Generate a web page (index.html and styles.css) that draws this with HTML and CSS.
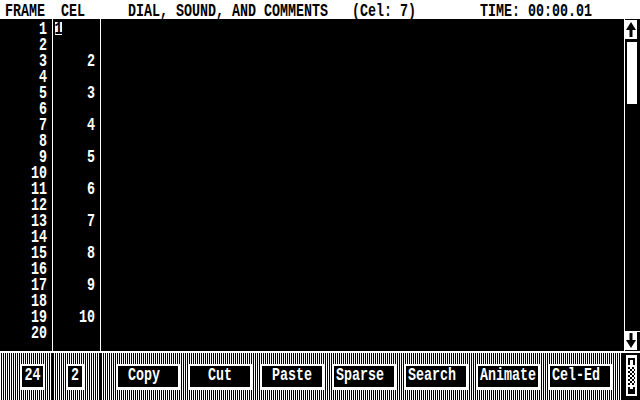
FILE: index.html
```html
<!DOCTYPE html>
<html>
<head>
<meta charset="utf-8">
<link rel="stylesheet" href="styles.css">
</head>
<body>
<div class="screen">
  <div class="header"><span class="t">FRAME  CEL</span><span class="t title">DIAL, SOUND, AND COMMENTS   (Cel: 7)        TIME: 00:00.01</span></div>
  <div class="main">
    <div class="col frames">
      <div class="row"><span class="t">1</span></div>
      <div class="row"><span class="t">2</span></div>
      <div class="row"><span class="t">3</span></div>
      <div class="row"><span class="t">4</span></div>
      <div class="row"><span class="t">5</span></div>
      <div class="row"><span class="t">6</span></div>
      <div class="row"><span class="t">7</span></div>
      <div class="row"><span class="t">8</span></div>
      <div class="row"><span class="t">9</span></div>
      <div class="row"><span class="t">10</span></div>
      <div class="row"><span class="t">11</span></div>
      <div class="row"><span class="t">12</span></div>
      <div class="row"><span class="t">13</span></div>
      <div class="row"><span class="t">14</span></div>
      <div class="row"><span class="t">15</span></div>
      <div class="row"><span class="t">16</span></div>
      <div class="row"><span class="t">17</span></div>
      <div class="row"><span class="t">18</span></div>
      <div class="row"><span class="t">19</span></div>
      <div class="row"><span class="t">20</span></div>
    </div>
    <div class="col cels">
      <div class="row first"><div class="cur"><span class="t">1</span></div></div>
      <div class="row"></div>
      <div class="row"><span class="t">2</span></div>
      <div class="row"></div>
      <div class="row"><span class="t">3</span></div>
      <div class="row"></div>
      <div class="row"><span class="t">4</span></div>
      <div class="row"></div>
      <div class="row"><span class="t">5</span></div>
      <div class="row"></div>
      <div class="row"><span class="t">6</span></div>
      <div class="row"></div>
      <div class="row"><span class="t">7</span></div>
      <div class="row"></div>
      <div class="row"><span class="t">8</span></div>
      <div class="row"></div>
      <div class="row"><span class="t">9</span></div>
      <div class="row"></div>
      <div class="row"><span class="t">10</span></div>
      <div class="row"></div>
    </div>
    <div class="comments"></div>
    <div class="scroll">
      <div class="arrow up"><svg width="12" height="19" viewBox="0 0 12 19"><polygon points="6,2 11,10 7.5,10 7.5,17 4.5,17 4.5,10 1,10" fill="#000"/></svg></div>
      <div class="thumb"></div>
      <div class="track"></div>
      <div class="hline"></div>
      <div class="arrow down"><svg width="12" height="18" viewBox="0 0 12 18"><polygon points="1,8 4.5,8 4.5,1 7.5,1 7.5,8 11,8 6,16" fill="#000"/></svg></div>
    </div>
  </div>
  <div class="bar">
    <div class="seg seg1"><div class="num wide"><span class="t">24</span></div></div>
    <div class="vl"></div>
    <div class="seg seg2"><div class="num"><span class="t">2</span></div></div>
    <div class="vl"></div>
    <div class="seg seg3">
      <div class="btn"><span class="t"> Copy</span></div>
      <div class="btn"><span class="t">  Cut</span></div>
      <div class="btn"><span class="t"> Paste</span></div>
      <div class="btn"><span class="t">Sparse</span></div>
      <div class="btn"><span class="t">Search</span></div>
      <div class="btn"><span class="t">Animate</span></div>
      <div class="btn"><span class="t">Cel-Ed</span></div>
    </div>
    <div class="blk"></div>
    <div class="widget">
      <svg width="11" height="41" viewBox="0 0 11 41">
        <rect x="0" y="0" width="11" height="41" fill="#fff"/>
        <path d="M2 3h7v7h-2v-5h-3v5h-2z" fill="#000"/>
        <g fill="#000">
          <rect x="2" y="12" width="2" height="2"/><rect x="6" y="12" width="2" height="2"/>
          <rect x="4" y="14" width="2" height="2"/><rect x="8" y="14" width="1" height="2"/>
          <rect x="2" y="16" width="2" height="2"/><rect x="6" y="16" width="2" height="2"/>
          <rect x="4" y="18" width="2" height="2"/><rect x="8" y="18" width="1" height="2"/>
          <rect x="2" y="20" width="2" height="2"/><rect x="6" y="20" width="2" height="2"/>
          <rect x="4" y="22" width="2" height="2"/><rect x="8" y="22" width="1" height="2"/>
          <rect x="2" y="24" width="2" height="2"/><rect x="6" y="24" width="2" height="2"/>
          <rect x="4" y="26" width="2" height="2"/><rect x="8" y="26" width="1" height="2"/>
          <rect x="2" y="28" width="2" height="2"/><rect x="6" y="28" width="2" height="2"/>
        </g>
        <path d="M2 32h2v2h3v-2h2v7h-7z" fill="#000"/>
      </svg>
    </div>
    <div class="edge"></div>
  </div>
</div>
</body>
</html>
```
FILE: styles.css
```css
html, body {
  margin: 0;
  padding: 0;
  background: #000;
}

.screen {
  width: 640px;
  height: 400px;
  display: flex;
  flex-direction: column;
  overflow: hidden;
  font-family: "Liberation Mono", "DejaVu Sans Mono", monospace;
  font-weight: bold;
  font-size: 13.33px;
  line-height: 16px;
  color: #fff;
}

.t {
  display: block;
  white-space: pre;
  line-height: 10px;
  height: 10px;
  transform: translateY(6.2px) scaleY(1.42);
}

.header {
  height: 19px;
  flex: none;
  background: #fff;
  color: #000;
  display: flex;
  align-items: flex-start;
  padding-left: 5px;
}

.header .t {
  transform: translateY(6.5px) scaleY(1.42);
}

.title {
  margin-left: 43px;
}

.main {
  height: 332px;
  flex: none;
  display: flex;
  background: #000;
}

.col {
  display: flex;
  flex-direction: column;
  border-right: 1px solid #fff;
}

.frames {
  width: 47px;
  padding-right: 5px;
}

.cels {
  width: 42px;
  padding-right: 5px;
}

.row {
  height: 16px;
  display: flex;
  justify-content: flex-end;
  align-items: flex-start;
}

.row.first {
  justify-content: flex-start;
}

.cur {
  width: 7px;
  height: 13px;
  margin: 3px 0 0 2px;
  background: #fff;
  color: #000;
  display: flex;
  justify-content: center;
}

.cur .t {
  transform: translateY(3px) scaleY(1.42);
}

.comments {
  width: 523px;
  border-right: 1px solid #fff;
}

.scroll {
  width: 15px;
  display: flex;
  flex-direction: column;
}

.arrow {
  width: 12px;
  background: #fff;
  display: flex;
}

.arrow.up {
  height: 19px;
  margin-top: 1px;
}

.arrow.down {
  height: 18px;
  margin-bottom: 1px;
}

.thumb {
  width: 10px;
  height: 62px;
  margin: 3px 0 0 2px;
  background: #fff;
}

.track {
  flex: 1;
}

.hline {
  height: 1px;
  background: #fff;
}

.bar {
  height: 47px;
  flex: none;
  border-top: 2px solid #fff;
  display: flex;
  background: repeating-linear-gradient(to right, #fff 0 1px, #000 1px 2px);
}

.seg {
  display: flex;
  align-items: flex-start;
  padding-top: 11px;
  box-sizing: border-box;
}

.seg1 {
  width: 52px;
  padding-left: 20px;
}

.seg2 {
  width: 47px;
  padding-left: 13px;
}

.seg3 {
  width: 521px;
  padding-left: 15px;
  gap: 8px;
}

.vl {
  width: 1px;
  background: #000;
}

.num {
  width: 14px;
  height: 21px;
  border: 2px solid #fff;
  border-bottom-width: 3px;
  background: #000;
  display: flex;
  justify-content: center;
  align-items: flex-start;
}

.num.wide {
  width: 21px;
}

.num .t,
.btn .t {
  transform: translateY(4.5px) scaleY(1.42);
}

.btn {
  height: 21px;
  width: 58px;
  border: 2px solid #fff;
  border-bottom-width: 3px;
  background: #000;
  padding-left: 2px;
  display: flex;
  align-items: flex-start;
}

.blk {
  width: 4px;
  background: #000;
}

.widget {
  width: 11px;
  background: #000;
  padding-top: 2px;
}

.widget svg {
  display: block;
}

.edge {
  width: 3px;
  background: #000;
}
```
